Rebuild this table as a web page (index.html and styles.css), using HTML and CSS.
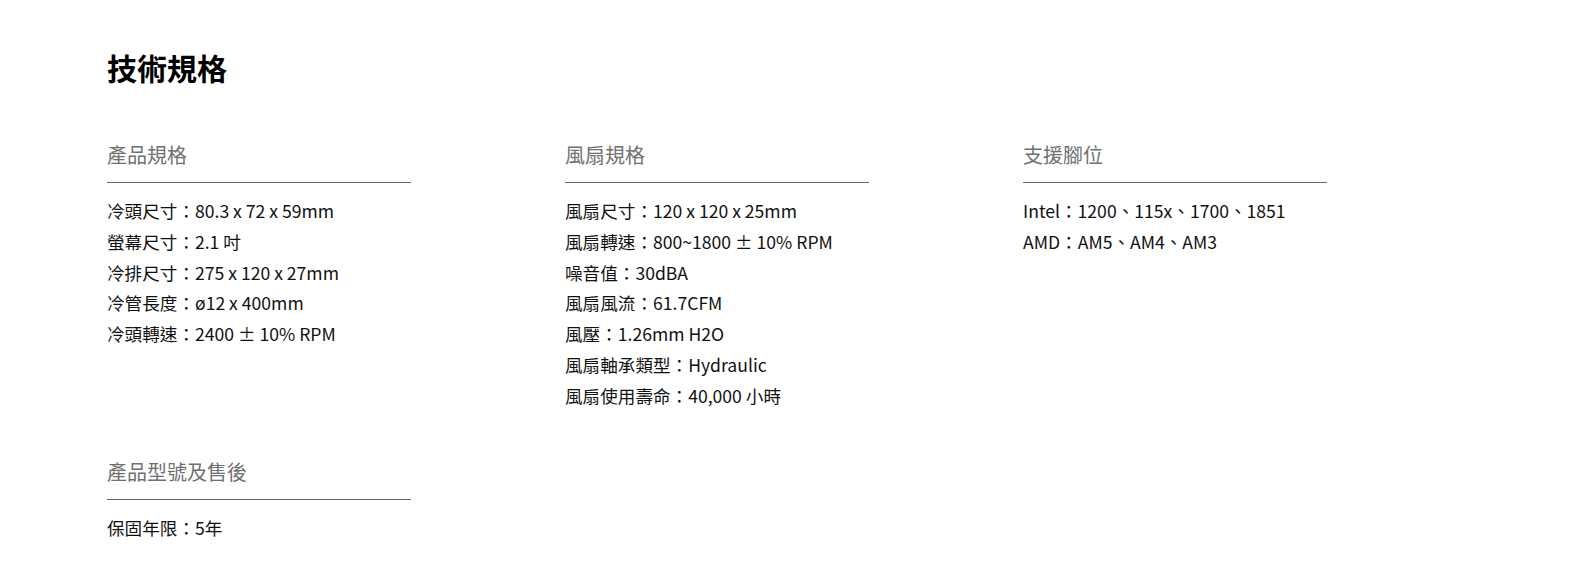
FILE: index.html
```html
<!DOCTYPE html>
<html lang="zh-Hant">
<head>
<meta charset="utf-8">
<title>技術規格</title>
<link rel="stylesheet" href="styles.css">
</head>
<body>
<main class="specs">
  <h1 class="specs-title">技術規格</h1>
  <div class="specs-grid">
    <section class="spec-group">
      <h2 class="spec-heading">產品規格</h2>
      <ul class="spec-list">
        <li>冷頭尺寸：80.3 x 72 x 59mm</li>
        <li>螢幕尺寸：2.1 吋</li>
        <li>冷排尺寸：275 x 120 x 27mm</li>
        <li>冷管長度：ø12 x 400mm</li>
        <li>冷頭轉速：2400 ± 10% RPM</li>
      </ul>
    </section>
    <section class="spec-group">
      <h2 class="spec-heading">風扇規格</h2>
      <ul class="spec-list">
        <li>風扇尺寸：120 x 120 x 25mm</li>
        <li>風扇轉速：800~1800 ± 10% RPM</li>
        <li>噪音值：30dBA</li>
        <li>風扇風流：61.7CFM</li>
        <li>風壓：1.26mm H2O</li>
        <li>風扇軸承類型：Hydraulic</li>
        <li>風扇使用壽命：40,000 小時</li>
      </ul>
    </section>
    <section class="spec-group">
      <h2 class="spec-heading">支援腳位</h2>
      <ul class="spec-list">
        <li>Intel：1200、115x、1700、1851</li>
        <li>AMD：AM5、AM4、AM3</li>
      </ul>
    </section>
    <section class="spec-group">
      <h2 class="spec-heading">產品型號及售後</h2>
      <ul class="spec-list">
        <li>保固年限：5年</li>
      </ul>
    </section>
  </div>
</main>
</body>
</html>
```

FILE: styles.css
```css
html, body {
  margin: 0;
  padding: 0;
  background: #ffffff;
}

body {
  font-family: "Noto Sans CJK TC", "Noto Sans", sans-serif;
  color: #111111;
}

.specs {
  padding: 46px 107px 0;
}

.specs-title {
  margin: 0;
  font-size: 30px;
  line-height: 42px;
  font-weight: 700;
  color: #000000;
}

.specs-grid {
  margin-top: 52px;
  display: grid;
  grid-template-columns: repeat(3, 304px);
  column-gap: 154px;
  row-gap: 46px;
}

.spec-heading {
  margin: 0;
  padding-bottom: 12px;
  border-bottom: 1px solid #666666;
  font-size: 20px;
  line-height: 30px;
  font-weight: 400;
  color: #707070;
}

.spec-list {
  list-style: none;
  margin: 13px 0 0;
  padding: 0;
  font-size: 17.6px;
  line-height: 1.75;
  color: #111111;
}
```
